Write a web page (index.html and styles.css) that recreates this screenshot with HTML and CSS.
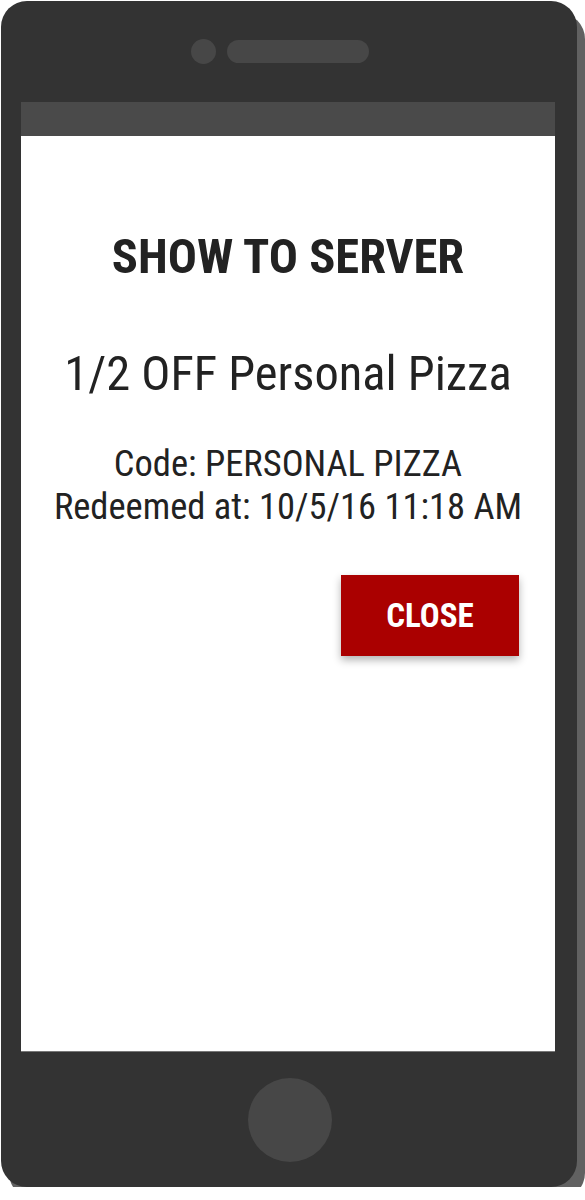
FILE: index.html
```html
<!DOCTYPE html>
<html lang="en">
<head>
  <meta charset="UTF-8" />
  <meta name="viewport" content="width=device-width, initial-scale=1.0" />
  <title>Show to server</title>
  <link rel="stylesheet" href="styles.css">
</head>
<body>
  <div class="phone">
    <div class="phone-top">
      <span class="camera"></span>
      <span class="speaker"></span>
    </div>
    <div class="status-bar"></div>
    <main class="screen">
      <h1 class="title">SHOW TO SERVER</h1>
      <p class="offer">1/2 OFF Personal Pizza</p>
      <div class="details">
        <p>Code: PERSONAL PIZZA</p>
        <p>Redeemed at: 10/5/16 11:18 AM</p>
      </div>
      <div class="actions">
        <button class="close-btn">CLOSE</button>
      </div>
    </main>
    <div class="phone-bottom">
      <span class="home-btn"></span>
    </div>
  </div>
</body>
</html>
```

FILE: styles.css
```css
* {
  margin: 0;
  padding: 0;
  box-sizing: border-box;
}
body {
  background: #fff;
  font-family: "Roboto", sans-serif;
  font-stretch: 75%;
  color: #222;
}
.phone {
  width: 576px;
  height: 1186px;
  margin: 1px 0 0 1px;
  background: #333;
  border-radius: 26px;
  box-shadow: 8px 12px 0 #616161;
  display: flex;
  flex-direction: column;
  padding: 0 22px 0 20px;
}
.phone-top {
  height: 101px;
  display: flex;
  align-items: center;
  justify-content: center;
  gap: 11px;
  padding: 0 16px 0 0;
}
.camera {
  width: 25px;
  height: 25px;
  border-radius: 50%;
  background: #474747;
}
.speaker {
  width: 142px;
  height: 23px;
  border-radius: 12px;
  background: #474747;
}
.status-bar {
  height: 34px;
  background: #4a4a4a;
}
.screen {
  height: 916px;
  background: #fff;
  border-bottom: 1px solid #777;
  text-align: center;
  padding-top: 93px;
}
.title {
  font-size: 48.5px;
  font-weight: bold;
  line-height: 56px;
}
.offer {
  font-size: 48.5px;
  line-height: 56px;
  margin-top: 61px;
}
.details {
  margin-top: 40px;
  font-size: 36.5px;
  line-height: 43px;
}
.actions {
  display: flex;
  justify-content: flex-end;
  padding-right: 36px;
  margin-top: 47px;
}
.close-btn {
  width: 178px;
  height: 81px;
  background: #aa0000;
  color: #fff;
  border: none;
  font-family: inherit;
  font-stretch: 75%;
  font-size: 33px;
  font-weight: bold;
  box-shadow: 0 4px 8px rgba(0, 0, 0, 0.3);
}
.phone-bottom {
  flex: 1;
  display: flex;
  justify-content: center;
  align-items: center;
  padding: 0 0 0 4px;
}
.home-btn {
  width: 84px;
  height: 84px;
  border-radius: 50%;
  background: #474747;
}
```
